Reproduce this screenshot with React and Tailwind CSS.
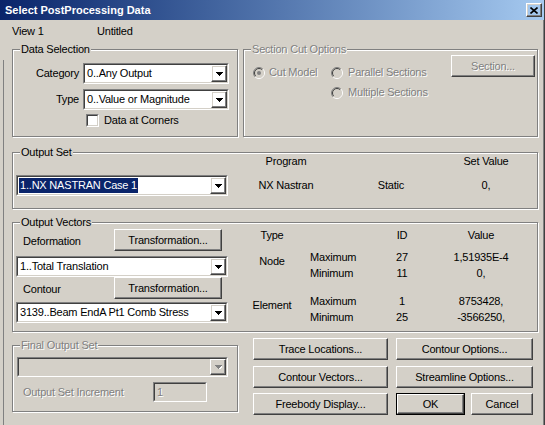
import React from 'react';

const DIS = 'text-[#808080] [text-shadow:1px_1px_0_#fff]';
const RAISED =
  'border border-t-white border-l-white border-r-[#404040] border-b-[#404040] shadow-[inset_-1px_-1px_0_#808080,inset_1px_1px_0_#d4d0c8]';
const SUNKEN =
  'border border-t-[#808080] border-l-[#808080] border-r-white border-b-white';
const SUNKEN_IN =
  'border border-t-[#404040] border-l-[#404040] border-r-[#d4d0c8] border-b-[#d4d0c8]';

const Group = ({ label, disabled, className = '', children }) => (
  <div className={`relative border border-[#808080] shadow-[inset_1px_1px_0_#fff,1px_1px_0_#fff] ${className}`}>
    <span className={`absolute -top-[7px] left-[7px] px-[1px] bg-[#d4d0c8] leading-[13px] ${disabled ? DIS : ''}`}>
      {label}
    </span>
    {children}
  </div>
);

const Arrow = ({ disabled }) => (
  <svg width="7" height="4" viewBox="0 0 7 4" shapeRendering="crispEdges">
    {disabled && (
      <g fill="#fff" transform="translate(1 1)">
        <rect x="0" y="0" width="7" height="1" />
        <rect x="1" y="1" width="5" height="1" />
        <rect x="2" y="2" width="3" height="1" />
        <rect x="3" y="3" width="1" height="1" />
      </g>
    )}
    <g fill={disabled ? '#808080' : '#000'}>
      <rect x="0" y="0" width="7" height="1" />
      <rect x="1" y="1" width="5" height="1" />
      <rect x="2" y="2" width="3" height="1" />
      <rect x="3" y="3" width="1" height="1" />
    </g>
  </svg>
);

const Combo = ({ text, selected, disabled, className = '' }) => (
  <div className={`flex ${SUNKEN} ${className}`}>
    <div className={`flex flex-1 min-w-0 ${SUNKEN_IN} ${disabled ? 'bg-[#d4d0c8]' : 'bg-white'}`}>
      <div className="flex flex-1 items-center pl-[1px] whitespace-nowrap overflow-hidden">
        {selected ? (
          <span className="bg-[#0a246a] text-white leading-[15px] px-[1px]">{text}</span>
        ) : (
          <span className="pl-[1px]">{text}</span>
        )}
      </div>
      <div className={`flex w-[16px] items-center justify-center ${RAISED}`}>
        <Arrow disabled={disabled} />
      </div>
    </div>
  </div>
);

const Btn = ({ children, disabled, className = '' }) => (
  <div className={`flex items-center justify-center whitespace-nowrap ${RAISED} ${disabled ? DIS : ''} ${className}`}>
    {children}
  </div>
);

const Radio = ({ checked }) => (
  <svg width="12" height="12" viewBox="0 0 12 12">
    <circle cx="6" cy="6" r="5" fill="#d4d0c8" />
    <path d="M2.1 9.9A5.5 5.5 0 0 1 9.9 2.1" fill="none" stroke="#808080" />
    <path d="M9.9 2.1A5.5 5.5 0 0 1 2.1 9.9" fill="none" stroke="#fff" />
    <path d="M2.8 9.2A4.5 4.5 0 0 1 9.2 2.8" fill="none" stroke="#404040" />
    <path d="M9.2 2.8A4.5 4.5 0 0 1 2.8 9.2" fill="none" stroke="#d4d0c8" />
    {checked && <circle cx="6" cy="6" r="2" fill="#808080" />}
  </svg>
);

const Check = () => (
  <div className={`w-[13px] h-[13px] ${SUNKEN}`}>
    <div className={`w-full h-full bg-white ${SUNKEN_IN}`} />
  </div>
);

const rowsNode = [
  ['Maximum', '27', '1,51935E-4'],
  ['Minimum', '11', '0,'],
];
const rowsElem = [
  ['Maximum', '1', '8753428,'],
  ['Minimum', '25', '-3566250,'],
];

const VecGroup = ({ type, rows, className = '' }) => (
  <div className={`flex ${className}`}>
    <div className="w-[54px] pt-[6px] text-center">{type}</div>
    <div className="flex flex-col">
      {rows.map(([mm, id, val]) => (
        <div key={mm} className="flex h-[16px] items-center">
          <span className="w-[77px] pl-[11px]">{mm}</span>
          <span className="w-[52px] text-center">{id}</span>
          <span className="w-[106px] text-center">{val}</span>
        </div>
      ))}
    </div>
  </div>
);

export default function App() {
  return (
    <div className="relative w-[545px] h-[425px] overflow-hidden bg-[#d4d0c8] text-[11px] leading-[13px] tracking-[-0.2px] text-black font-['Liberation_Sans',Arial,sans-serif] border-r border-r-[#404040] shadow-[inset_-1px_0_0_#808080]">
      {/* faint frame line on the left edge */}
      <div className="absolute left-[3px] top-[60px] bottom-0 w-px bg-[#808080]" />

      {/* title bar */}
      <div className="flex h-[20px] items-center bg-linear-to-r from-[#0a246a] to-[#a6caf0] pl-[5px] pr-[2px]">
        <span className="font-bold text-white tracking-normal">Select PostProcessing Data</span>
        <Btn className="ml-auto w-[16px] h-[14px]">
          <svg width="8" height="7" viewBox="0 0 8 7">
            <path d="M0.5 0.5L7.5 6.5M7.5 0.5L0.5 6.5" stroke="#000" strokeWidth="1.6" />
          </svg>
        </Btn>
      </div>

      <div className="flex h-[13px] mt-[5px] pl-[12px]">
        <span className="w-[85px]">View 1</span>
        <span>Untitled</span>
      </div>

      {/* data selection + section cut */}
      <div className="flex mt-[11px] pl-[12px] gap-[5px]">
        <Group label="Data Selection" className="w-[226px] h-[88px]">
          <div className="flex flex-col pt-[13px]">
            <div className="flex items-center">
              <span className="w-[66px] text-right">Category</span>
              <Combo className="ml-[4px] w-[146px] h-[21px]" text="0..Any Output" />
            </div>
            <div className="flex items-center mt-[5px]">
              <span className="w-[66px] text-right">Type</span>
              <Combo className="ml-[4px] w-[146px] h-[21px]" text="0..Value or Magnitude" />
            </div>
            <div className="flex items-center mt-[4px] ml-[73px]">
              <Check />
              <span className="ml-[5px]">Data at Corners</span>
            </div>
          </div>
        </Group>

        <Group label="Section Cut Options" disabled className="w-[295px] h-[88px] flex">
          <div className={`flex flex-col pt-[16px] pl-[9px] ${DIS}`}>
            <div className="flex h-[13px] items-center">
              <div className="flex w-[78px] items-center">
                <Radio checked />
                <span className="ml-[4px]">Cut Model</span>
              </div>
              <Radio />
              <span className="ml-[5px]">Parallel Sections</span>
            </div>
            <div className="flex h-[13px] items-center mt-[7px] ml-[78px]">
              <Radio />
              <span className="ml-[5px]">Multiple Sections</span>
            </div>
          </div>
          <Btn disabled className="ml-auto mt-[5px] mr-[2px] w-[84px] h-[22px]">
            Section...
          </Btn>
        </Group>
      </div>

      {/* output set */}
      <Group label="Output Set" className="mt-[15px] ml-[12px] w-[526px] h-[57px]">
        <div className="flex pl-[3px]">
          <Combo className="mt-[22px] w-[212px] h-[21px]" text="1..NX NASTRAN Case 1" selected />
          <div className="flex w-[116px] flex-col items-center pt-[2px]">
            <span>Program</span>
            <span className="mt-[11px]">NX Nastran</span>
          </div>
          <div className="flex w-[94px] flex-col items-center pt-[2px]">
            <span className="h-[13px]" />
            <span className="mt-[11px]">Static</span>
          </div>
          <div className="flex w-[96px] flex-col items-center pt-[2px]">
            <span>Set Value</span>
            <span className="mt-[11px]">0,</span>
          </div>
        </div>
      </Group>

      {/* output vectors */}
      <Group label="Output Vectors" className="mt-[13px] ml-[12px] w-[526px] h-[110px]">
        <div className="flex pl-[3px]">
          <div className="flex w-[212px] flex-col pt-[6px]">
            <div className="flex h-[22px] items-center">
              <span className="w-[98px] pl-[7px] pt-[3px]">Deformation</span>
              <Btn className="w-[108px] h-[22px]">Transformation...</Btn>
            </div>
            <Combo className="mt-[5px] h-[21px]" text="1..Total Translation" />
            <div className="flex h-[22px] items-center">
              <span className="w-[98px] pl-[7px] pt-[3px]">Contour</span>
              <Btn className="w-[108px] h-[22px]">Transformation...</Btn>
            </div>
            <Combo className="mt-[3px] h-[21px]" text="3139..Beam EndA Pt1 Comb Stress" />
          </div>

          <div className="flex flex-col ml-[17px] pt-[6px]">
            <div className="flex h-[13px]">
              <span className="w-[54px] text-center">Type</span>
              <span className="w-[77px]" />
              <span className="w-[52px] text-center">ID</span>
              <span className="w-[106px] text-center">Value</span>
            </div>
            <VecGroup type="Node" rows={rowsNode} className="mt-[7px]" />
            <VecGroup type="Element" rows={rowsElem} className="mt-[12px]" />
          </div>
        </div>
      </Group>

      {/* bottom */}
      <div className="flex">
        <Group label="Final Output Set" disabled className="mt-[13px] ml-[12px] w-[226px] h-[67px]">
          <div className="flex flex-col">
            <Combo disabled className="mt-[11px] ml-[4px] w-[211px] h-[20px]" text="" />
            <div className="flex h-[20px] items-center mt-[5px] ml-[10px]">
              <span className={`w-[130px] ${DIS}`}>Output Set Increment</span>
              <div className={`w-[54px] h-[20px] ${SUNKEN}`}>
                <div className={`flex h-full items-center pl-[2px] bg-[#d4d0c8] ${SUNKEN_IN} ${DIS}`}>1</div>
              </div>
            </div>
          </div>
        </Group>

        <div className="flex flex-col ml-[15px] mt-[6px]">
          <div className="flex gap-[8px]">
            <Btn className="w-[135px] h-[22px]">Trace Locations...</Btn>
            <Btn className="w-[137px] h-[22px]">Contour Options...</Btn>
          </div>
          <div className="flex gap-[8px] mt-[6px]">
            <Btn className="w-[135px] h-[22px]">Contour Vectors...</Btn>
            <Btn className="w-[137px] h-[22px]">Streamline Options...</Btn>
          </div>
          <div className="flex mt-[5px]">
            <Btn className="w-[135px] h-[22px]">Freebody Display...</Btn>
            <div className="ml-[8px] w-[69px] h-[22px] border border-black">
              <Btn className="w-full h-full">OK</Btn>
            </div>
            <Btn className="ml-[6px] w-[62px] h-[22px]">Cancel</Btn>
          </div>
        </div>
      </div>
    </div>
  );
}
